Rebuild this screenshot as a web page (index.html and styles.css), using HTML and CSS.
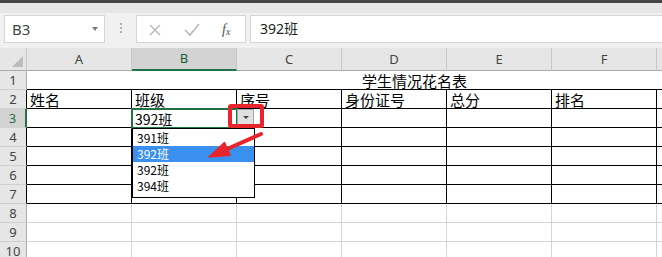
FILE: index.html
```html
<!DOCTYPE html>
<html lang="zh-CN">
<head>
<meta charset="utf-8">
<title>学生情况花名表</title>
<link rel="stylesheet" href="styles.css">
</head>
<body>
<div class="topstrip"></div>
<div class="fbar">
  <div class="namebox"><span>B3</span><span class="nb-arrow"></span></div>
  <div class="sep">
    <svg width="4" height="14" viewBox="0 0 4 14"><rect x="1" y="1" width="2" height="2" fill="#b3b3b3"/><rect x="1" y="5" width="2" height="2" fill="#b3b3b3"/><rect x="1" y="9" width="2" height="2" fill="#b3b3b3"/></svg>
  </div>
  <div class="fxbox">
    <svg width="108" height="26" viewBox="0 0 108 26">
      <path d="M13 9 L23 19 M23 9 L13 19" stroke="#b8b8b8" stroke-width="1.4" fill="none"/>
      <path d="M48 14 L53 19 L62 8" stroke="#b8b8b8" stroke-width="1.6" fill="none"/>
      <text x="85" y="18" class="fx">f<tspan class="fxs" dy="1">x</tspan></text>
    </svg>
  </div>
  <div class="finput">392班</div>
</div>
<div class="sheet">
  <div class="corner"><span class="tri"></span></div>
  <div class="ch">A</div><div class="ch sel">B</div><div class="ch">C</div><div class="ch">D</div><div class="ch">E</div><div class="ch">F</div><div class="ch"></div>

  <div class="rh">1</div>
  <div class="c title">学生情况花名表</div>

  <div class="rh blk">2</div>
  <div class="c b">姓名</div><div class="c b">班级</div><div class="c b">序号</div><div class="c b">身份证号</div><div class="c b">总分</div><div class="c b">排名</div><div class="c b"></div>

  <div class="rh blk rsel">3</div>
  <div class="c b"></div><div class="c b num">392班</div><div class="c b"></div><div class="c b"></div><div class="c b"></div><div class="c b"></div><div class="c b"></div>

  <div class="rh blk">4</div>
  <div class="c b"></div><div class="c b"></div><div class="c b"></div><div class="c b"></div><div class="c b"></div><div class="c b"></div><div class="c b"></div>

  <div class="rh blk">5</div>
  <div class="c b"></div><div class="c b"></div><div class="c b"></div><div class="c b"></div><div class="c b"></div><div class="c b"></div><div class="c b"></div>

  <div class="rh blk">6</div>
  <div class="c b"></div><div class="c b"></div><div class="c b"></div><div class="c b"></div><div class="c b"></div><div class="c b"></div><div class="c b"></div>

  <div class="rh blk">7</div>
  <div class="c b"></div><div class="c b"></div><div class="c b"></div><div class="c b"></div><div class="c b"></div><div class="c b"></div><div class="c b"></div>

  <div class="rh">8</div>
  <div class="c"></div><div class="c"></div><div class="c"></div><div class="c"></div><div class="c"></div><div class="c"></div><div class="c"></div>

  <div class="rh">9</div>
  <div class="c"></div><div class="c"></div><div class="c"></div><div class="c"></div><div class="c"></div><div class="c"></div><div class="c"></div>

  <div class="rh">10</div>
  <div class="c"></div><div class="c"></div><div class="c"></div><div class="c"></div><div class="c"></div><div class="c"></div><div class="c"></div>

  <div class="selection"></div>
  <div class="ddbtn"><span class="dd-tri"></span></div>
  <ul class="ddlist">
    <li>391班</li>
    <li class="hl">392班</li>
    <li>392班</li>
    <li>394班</li>
  </ul>
  <div class="redbox"></div>
  <svg class="arrow" width="662" height="209" viewBox="0 48 662 209">
    <line x1="261" y1="134" x2="226" y2="149.5" stroke="#e8252d" stroke-width="4" stroke-linecap="round"/>
    <polygon points="209,157 224.5,142.5 230.1,155.3" fill="#e8252d" stroke="#e8252d" stroke-width="1.5" stroke-linejoin="round"/>
  </svg>
</div>
</body>
</html>
```

FILE: styles.css
```css
* { box-sizing: border-box; }

body {
  margin: 0;
  width: 662px;
  height: 257px;
  overflow: hidden;
  background: #ffffff;
  font-family: "Noto Sans", "Noto Sans CJK SC", sans-serif;
}

.topstrip {
  height: 3px;
  background: #454545;
}

.fbar {
  display: flex;
  align-items: flex-start;
  height: 45px;
  padding-top: 12px;
  background: linear-gradient(#e6e6e6 0, #e6e6e6 10px, #f1f1f1 10px);
}

.namebox {
  margin-left: 4px;
  width: 101px;
  height: 28px;
  background: #fff;
  border: 1px solid #d6d6d6;
  display: flex;
  align-items: center;
  justify-content: space-between;
  padding: 0 6px 0 7px;
  font-size: 15px;
  color: #444;
}

.nb-arrow {
  width: 0;
  height: 0;
  border-left: 3.5px solid transparent;
  border-right: 3.5px solid transparent;
  border-top: 4px solid #7a7a7a;
}

.sep {
  width: 31px;
  height: 28px;
  display: flex;
  align-items: center;
  justify-content: center;
}

.fxbox {
  width: 110px;
  height: 28px;
  background: #fff;
  border: 1px solid #d6d6d6;
}

.fxbox svg { display: block; }

.fx {
  font-family: "Liberation Serif", serif;
  font-style: italic;
  font-size: 14px;
  fill: #555;
}

.fxs { font-size: 10px; }

.finput {
  margin-left: 4px;
  flex: 1;
  height: 28px;
  background: #fff;
  border: 1px solid #d6d6d6;
  border-right: none;
  padding-left: 9px;
  font-family: "Noto Sans", "Noto Sans CJK SC", sans-serif;
  font-size: 14px;
  line-height: 26px;
  color: #222;
}

.sheet {
  position: relative;
  display: grid;
  grid-template-columns: 27px repeat(6, 105px) 6px;
  grid-template-rows: 23px repeat(10, 19px);
}

.corner {
  position: relative;
  background: #e6e6e6;
  border-right: 1px solid #c8c8c8;
  border-bottom: 1px solid #ababab;
}

.tri {
  position: absolute;
  right: 3px;
  bottom: 3px;
  width: 0;
  height: 0;
  border-left: 11px solid transparent;
  border-bottom: 11px solid #bcbcbc;
}

.ch {
  background: #e6e6e6;
  border-right: 1px solid #c8c8c8;
  border-bottom: 1px solid #ababab;
  text-align: center;
  font-size: 13px;
  line-height: 22px;
  color: #444;
}

.ch.sel {
  background: #d3d3d3;
  border-bottom: 2px solid #217346;
  color: #1e5b3a;
  line-height: 21px;
}

.rh {
  background: #e6e6e6;
  border-right: 1px solid #ababab;
  border-bottom: 1px solid #d0d0d0;
  text-align: center;
  font-size: 13px;
  line-height: 18px;
  color: #444;
}

.rh.blk { border-right-color: #000; }

.rh.rsel {
  background: #d3d3d3;
  border-right: 2px solid #217346;
  color: #217346;
}

.c {
  border-right: 1px solid #d4d4d4;
  border-bottom: 1px solid #d4d4d4;
  padding: 1px 0 0 3px;
  font-family: "Noto Sans CJK SC", sans-serif;
  font-size: 15px;
  line-height: 18px;
  color: #000;
  white-space: nowrap;
}

.c.b {
  border-right-color: #000;
  border-bottom-color: #000;
}

.c.num { font-size: 14px; }

.c.title {
  grid-column: 2 / span 7;
  border-right: none;
  border-bottom-color: #000;
  padding-left: 335px;
}

.selection {
  position: absolute;
  left: 131px;
  top: 60px;
  width: 107px;
  height: 21px;
  border: 2px solid #217346;
}

.ddbtn {
  position: absolute;
  left: 237px;
  top: 61px;
  width: 17px;
  height: 16px;
  background: #e0e0e0;
  border: 1px solid #a8a8a8;
  display: flex;
  align-items: center;
  justify-content: center;
}

.dd-tri {
  width: 0;
  height: 0;
  border-left: 3px solid transparent;
  border-right: 3px solid transparent;
  border-top: 3px solid #444;
}

.ddlist {
  position: absolute;
  left: 132px;
  top: 80px;
  width: 123px;
  height: 70px;
  margin: 0;
  padding: 1px 0 0 0;
  list-style: none;
  background: #fff;
  border: 1px solid #000;
}

.ddlist li {
  height: 16px;
  line-height: 16px;
  padding-left: 4px;
  font-family: "Noto Sans CJK SC", sans-serif;
  font-size: 12px;
  color: #000;
}

.ddlist li.hl {
  background: #3a90ee;
  color: #fff;
}

.redbox {
  position: absolute;
  left: 228px;
  top: 56px;
  width: 36px;
  height: 24px;
  border: 4px solid #e8252d;
  border-radius: 3px;
}

.arrow {
  position: absolute;
  left: 0;
  top: 0;
}
```
